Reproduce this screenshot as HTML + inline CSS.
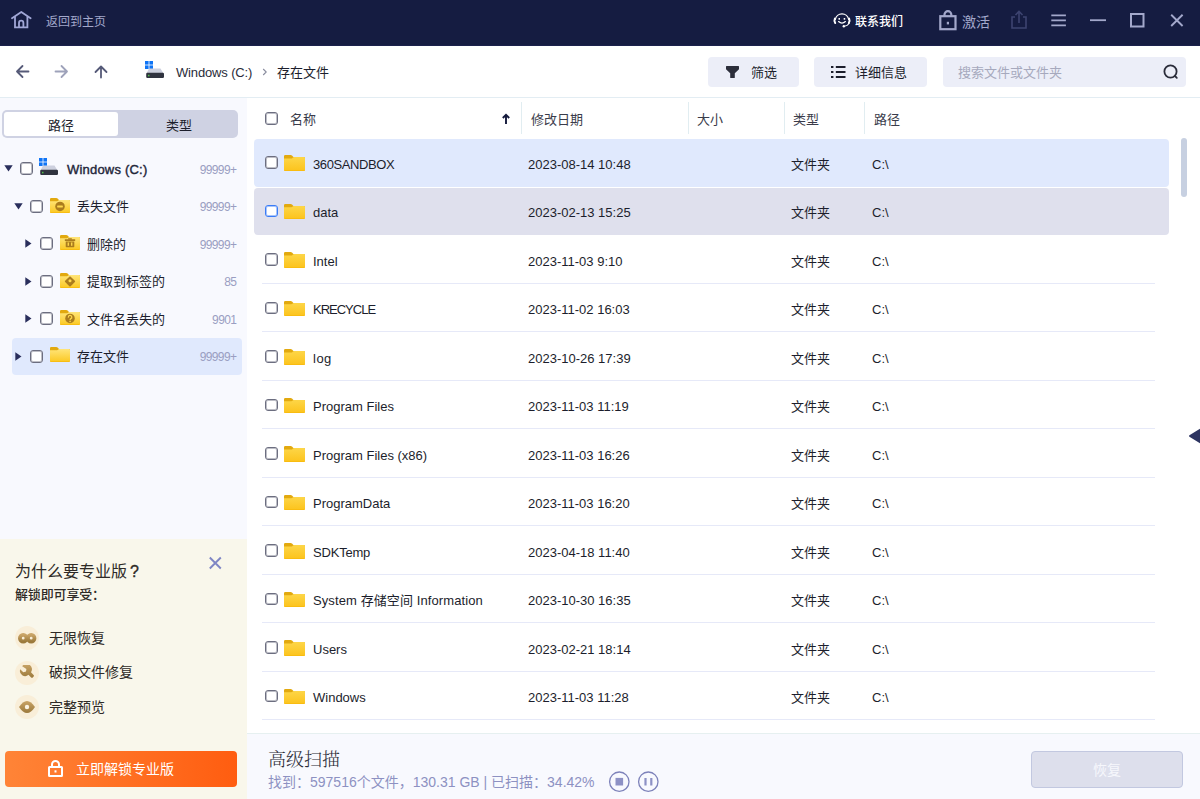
<!DOCTYPE html>
<html lang="zh-CN"><head><meta charset="utf-8"><title>数据恢复</title>
<style>
*{box-sizing:border-box;margin:0;padding:0}
html,body{width:1200px;height:799px;overflow:hidden;background:#fff}
body{font-family:"Liberation Sans","Noto Sans CJK SC",sans-serif;font-size:13px;color:#1c1e2c;position:relative}
.abs{position:absolute}
i{font-style:normal}
.t{position:absolute;white-space:nowrap;line-height:20px}
#title{position:absolute;left:0;top:0;width:1200px;height:46px;background:#151c41;border-bottom:1px solid #1b214c}
#title .t{color:#a3a8cb;font-size:12px}
#tool{position:absolute;left:0;top:46px;width:1200px;height:52px;background:#fff;border-bottom:1px solid #e3edf3}
.btn{position:absolute;top:57px;height:30px;background:#eceef8;border-radius:4px}
#sidebg{position:absolute;left:0;top:98px;width:247px;height:701px;background:#f8f9fe}
#tabs{position:absolute;left:2px;top:110px;width:236px;height:28px;background:#cfd2e3;border-radius:5px}
#tabs i{position:absolute;left:2px;top:2px;width:114px;height:24px;background:#fff;border-radius:3px}
.cb{position:absolute;width:13px;height:13px;border:1px solid #6c6e80;border-radius:3px;background:#fff;box-shadow:inset 0 0 0 1px rgba(108,110,128,.45)}
.cnt{position:absolute;white-space:nowrap;line-height:20px;color:#9a9ec2;font-size:12px;text-align:right;width:60px;left:177px;letter-spacing:-.6px;padding-right:.6px}
.ar{position:absolute}
#promo{position:absolute;left:0;top:539px;width:247px;height:260px;background:#f9f7eb}
.ic{position:absolute;left:15px;width:24px;height:24px;border-radius:12px;background:#f9eed8}
.it{position:absolute;left:49px;font-size:14px;color:#2e2a26;line-height:20px;white-space:nowrap}
#unlock{position:absolute;left:5px;top:751px;width:232px;height:36px;border-radius:4px;background:linear-gradient(90deg,#ff8437,#ff5d10)}
.h{position:absolute;top:110px;line-height:20px;white-space:nowrap;color:#3a3c4b}
.sep{position:absolute;top:102px;width:1px;height:32px;background:#e1edf1}
.row{position:absolute;left:262px;width:893px;border-bottom:1px solid #e6e9f8;white-space:nowrap}
.row .bg{display:none}
.row.sel,.row.hov{border-bottom:none}
.row.sel .bg,.row.hov .bg{display:block;position:absolute;left:-8px;top:2px;right:-14px;bottom:0;border-radius:4px;background:#e0e9fd}
.row.hov .bg{background:#dfe0ed;top:1px}
.row.sel .bg{top:1px}
.row>*{position:absolute}
.row .cb{left:3px;top:18px}
.row .fold{left:22px;top:17px}
.row span{line-height:20px;top:17px}
.row .nm{left:51px}
.row .dt{left:266px}
.row .ty{left:529px}
.row .pa{left:610px}
.row.odd .cb{height:12px}
.row.odd span{top:16px}
.row.odd .fold{height:15px}
.row.hov .cb{border-color:#3b7cf6;box-shadow:inset 0 0 0 1px rgba(59,124,246,.45)}
#bot{position:absolute;left:247px;top:733px;width:953px;height:66px;background:#f8f9fe;border-top:1px solid #e6f0f0}
#scroll{position:absolute;left:1181px;top:138px;width:6px;height:59px;border-radius:3px;background:#c7d0e1}
</style></head><body>
<svg width="0" height="0" style="position:absolute"><defs>
<linearGradient id="fg" x1="0" y1="0" x2="0" y2="1"><stop offset="0" stop-color="#fdd648"/><stop offset="1" stop-color="#fcc31c"/></linearGradient>
<linearGradient id="fg2" x1="0" y1="0" x2="0" y2="1"><stop offset="0" stop-color="#ffe57a"/><stop offset="1" stop-color="#fbc822"/></linearGradient>
<linearGradient id="gd" x1="0" y1="0" x2="0" y2="1"><stop offset="0" stop-color="#c9a467"/><stop offset="1" stop-color="#9c7a3c"/></linearGradient>
</defs></svg>
<div id="title">
 <svg class="abs" style="left:11px;top:10px" width="21" height="19" viewBox="0 0 21 19" fill="none" stroke="#a1a7d6" stroke-width="1.800" stroke-linejoin="round" stroke-linecap="round"><path d="M1 8.200L10.300 1.900l9.300 6.300"/><path d="M4 6.800V17.300H16.400V6.800" stroke-linejoin="miter"/><path d="M8 17V12.900a2.200 2.200 0 0 1 4.400 0V17"/></svg>
 <span class="t" style="left:46px;top:12px">返回到主页</span>
 <svg class="abs" style="left:832px;top:12px" width="20" height="17" viewBox="0 0 20 17" fill="none" stroke="#fff" stroke-width="1.200" stroke-linecap="round"><path d="M3.300 7.500A6.800 6.800 0 0 1 16.700 7.500"/><path d="M2.900 6.500Q1.800 8.800 3.200 11.100M17.100 6.500Q18.200 8.800 16.800 11.100" stroke-width="1.900"/><rect x="6.500" y="6" width="1.500" height="1.700" fill="#fff" stroke="none"/><rect x="11.700" y="6" width="1.500" height="1.700" fill="#fff" stroke="none"/><path d="M6.600 9.600Q10 12.600 13.400 9.600" stroke-width="1.300"/><path d="M17 11.500Q15.500 13.800 12.500 14.200" stroke-width="1.100"/><circle cx="11.800" cy="14.200" r="1.200" fill="#fff" stroke="none"/></svg>
 <span class="t" style="left:855px;top:12px;color:#fff;font-weight:500">联系我们</span>
 <svg class="abs" style="left:939px;top:10px" width="18" height="21" viewBox="0 0 18 21" fill="none" stroke="#a3a8cb" stroke-width="2.200"><rect x="1.300" y="6.200" width="15.200" height="13"/><path d="M5.500 6.200V4.600a3.400 3.400 0 0 1 6.800 0v1.600"/><rect x="7.800" y="11.800" width="2.200" height="2.600" fill="#a3a8cb" stroke="none"/></svg>
 <span class="t" style="left:962px;top:12px;font-size:14px">激活</span>
 <svg class="abs" style="left:1011px;top:10px" width="16" height="19" viewBox="0 0 16 19" fill="none" stroke="#3d4470" stroke-width="1.600"><path d="M4 7H1v11h14V7h-3"/><path d="M8 13V2M4.500 5L8 1.500 11.500 5"/></svg>
 <svg class="abs" style="left:1051px;top:13px" width="16" height="15" viewBox="0 0 16 15" stroke="#a3a8cb" stroke-width="1.800"><path d="M.3 2.300h14.600M.3 7.300h14.600M.3 12.300h14.600"/></svg>
 <svg class="abs" style="left:1090px;top:19px" width="17" height="3" viewBox="0 0 17 3" stroke="#a3a8cb" stroke-width="1.800"><path d="M0 1.200h16"/></svg>
 <svg class="abs" style="left:1130px;top:13px" width="15" height="15" viewBox="0 0 15 15" fill="none" stroke="#a3a8cb" stroke-width="2"><rect x="1" y="1" width="12.500" height="12.500"/></svg>
 <svg class="abs" style="left:1170px;top:14px" width="14" height="13" viewBox="0 0 14 13" stroke="#a3a8cb" stroke-width="1.900"><path d="M1.200.800l11.400 11.200M12.600.800L1.200 12"/></svg>
</div>
<div id="tool"></div>
<svg class="abs" style="left:15px;top:64px" width="15" height="15" viewBox="0 0 15 15" fill="none" stroke="#565a78" stroke-width="1.800" stroke-linecap="round" stroke-linejoin="round"><path d="M13.500 7.500H2M7.500 2L2 7.500 7.500 13"/></svg>
<svg class="abs" style="left:54px;top:64px" width="15" height="15" viewBox="0 0 15 15" fill="none" stroke="#9ea2ba" stroke-width="1.800" stroke-linecap="round" stroke-linejoin="round"><path d="M1.500 7.500H13M7.500 2L13 7.500 7.500 13"/></svg>
<svg class="abs" style="left:93px;top:64px" width="16" height="15" viewBox="0 0 16 15" fill="none" stroke="#565a78" stroke-width="1.800" stroke-linecap="round" stroke-linejoin="round"><path d="M8 13.500V2.500M2.500 8L8 2.500 13.500 8"/></svg>
<svg class="abs" style="left:145px;top:61px" width="19" height="17" viewBox="0 0 19 17"><rect x="0" y="0" width="3.600" height="3.600" fill="#0f74f5"/><rect x="4.400" y="0" width="3.600" height="3.600" fill="#0f74f5"/><rect x="0" y="4.400" width="3.600" height="3.600" fill="#0f74f5"/><rect x="4.400" y="4.400" width="3.600" height="3.600" fill="#0f74f5"/><path d="M4 7.500H15.500L18.500 12.500H1.500z" fill="#cdd0de"/><rect x="1.200" y="11.800" width="17.800" height="5.200" rx="1.200" fill="#30333f"/><rect x="3" y="13.800" width="1.500" height="1.500" fill="#4fc04a"/></svg>
<span class="t" style="left:176px;top:63px;color:#2a2c3a;letter-spacing:-.15px">Windows (C:)</span>
<svg class="abs" style="left:262px;top:68px" width="6" height="8" viewBox="0 0 6 8" fill="none" stroke="#8a8d9f" stroke-width="1.100"><path d="M1.200 1l3 3-3 3"/></svg>
<span class="t" style="left:277px;top:63px">存在文件</span>
<div class="btn" style="left:708px;width:91px"></div>
<svg class="abs" style="left:726px;top:66px" width="13" height="12" viewBox="0 0 13 12"><path d="M.6 0h11.800q.6 0 .6.600v2.600L8.800 7.200V11.500q0 .5-.5.500H4.700q-.5 0-.5-.5V7.200L0 3.200V.6Q0 0 .6 0z" fill="#2c2e3b"/></svg>
<span class="t" style="left:751px;top:63px">筛选</span>
<div class="btn" style="left:814px;width:113px"></div>
<svg class="abs" style="left:831px;top:66px" width="14.500" height="12" viewBox="0 0 15 12" preserveAspectRatio="none" fill="#1c1e2c"><rect x="0" y="0" width="2.500" height="2"/><rect x="5" y="0" width="10" height="2"/><rect x="0" y="5" width="2.500" height="2"/><rect x="5" y="5" width="10" height="2"/><rect x="0" y="10" width="2.500" height="2"/><rect x="5" y="10" width="10" height="2"/></svg>
<span class="t" style="left:855px;top:63px">详细信息</span>
<div class="btn" style="left:943px;width:243px"></div>
<span class="t" style="left:958px;top:63px;color:#a6a9bd">搜索文件或文件夹</span>
<svg class="abs" style="left:1163px;top:64px" width="16" height="16" viewBox="0 0 16 16" fill="none" stroke="#2a2c3a" stroke-width="1.800"><circle cx="7.500" cy="7.500" r="6.100"/><path d="M12 12l1.800 1.800" stroke-linecap="round"/></svg>

<div id="sidebg"></div>
<div id="tabs"><i></i></div>
<span class="t" style="left:48px;top:116px">路径</span>
<span class="t" style="left:166px;top:116px">类型</span>

<svg class="ar" style="left:4px;top:165px" width="9" height="7" viewBox="0 0 9 7"><path d="M.3.3h8.400L4.500 6.500z" fill="#2a2f5c"/></svg>
<i class="cb" style="left:20px;top:162px"></i>
<svg class="abs" style="left:39px;top:158px" width="19" height="17" viewBox="0 0 19 17"><rect x="0" y="0" width="3.600" height="3.600" fill="#0f74f5"/><rect x="4.400" y="0" width="3.600" height="3.600" fill="#0f74f5"/><rect x="0" y="4.400" width="3.600" height="3.600" fill="#0f74f5"/><rect x="4.400" y="4.400" width="3.600" height="3.600" fill="#0f74f5"/><path d="M4 7.500H15.500L18.500 12.500H1.500z" fill="#cdd0de"/><rect x="1.200" y="11.800" width="17.800" height="5.200" rx="1.200" fill="#30333f"/><rect x="3" y="13.800" width="1.500" height="1.500" fill="#4fc04a"/></svg>
<span class="t" style="left:67px;top:160px;-webkit-text-stroke:.4px #23263a;color:#23263a;letter-spacing:.2px">Windows (C:)</span><span class="cnt" style="top:160px">99999+</span>

<svg class="ar" style="left:14px;top:203px" width="9" height="7" viewBox="0 0 9 7"><path d="M.3.3h8.400L4.500 6.500z" fill="#2a2f5c"/></svg>
<i class="cb" style="left:30px;top:200px"></i>
<svg class="abs" style="left:49.500px;top:198px" width="20" height="15" viewBox="0 0 21 16" preserveAspectRatio="none"><path d="M0 1.200Q0 0 1.200 0H6.600Q7.400 0 8 .600L9.400 2H19.800Q21 2 21 3.200V6H0z" fill="#e2a90f"/><path d="M0 3.400H7.400Q8 3.400 8.500 2.900L9 2.400Q9.400 2 10 2H19.800Q21 2 21 3.200V14.800Q21 16 19.800 16H1.200Q0 16 0 14.800z" fill="url(#fg2)"/><path d="M0 14.300V14.800Q0 16 1.200 16H19.800Q21 16 21 14.800V14.300Q21 15.300 19.800 15.300H1.200Q0 15.300 0 14.300z" fill="#f7b90d"/><circle cx="10.500" cy="9" r="5" fill="#ab7c1d"/><rect x="7.500" y="8" width="6" height="2" rx=".5" fill="#ffd84c"/></svg>
<span class="t" style="left:77px;top:197px">丢失文件</span><span class="cnt" style="top:197px">99999+</span>

<svg class="ar" style="left:25px;top:239px" width="7" height="9" viewBox="0 0 7 9"><path d="M.3.300v8.400L6.500 4.500z" fill="#2a2f5c"/></svg>
<i class="cb" style="left:40px;top:237px"></i>
<svg class="abs" style="left:59.500px;top:235px" width="20" height="15" viewBox="0 0 21 16" preserveAspectRatio="none"><path d="M0 1.200Q0 0 1.200 0H6.600Q7.400 0 8 .600L9.400 2H19.800Q21 2 21 3.200V6H0z" fill="#e2a90f"/><path d="M0 3.400H7.400Q8 3.400 8.500 2.900L9 2.400Q9.400 2 10 2H19.800Q21 2 21 3.200V14.800Q21 16 19.800 16H1.200Q0 16 0 14.800z" fill="url(#fg2)"/><path d="M0 14.300V14.800Q0 16 1.200 16H19.800Q21 16 21 14.800V14.300Q21 15.300 19.800 15.300H1.200Q0 15.300 0 14.300z" fill="#f7b90d"/><g fill="#ab7c1d"><rect x="5" y="4.500" width="11" height="1.800" rx=".4"/><rect x="8.500" y="3.400" width="4" height="1.500" rx=".4"/><path d="M6 7h9v5.300q0 .7-.7.700H6.700q-.7 0-.7-.7z"/></g><rect x="8" y="8" width="1.400" height="3.500" fill="#ffd84c"/><rect x="11.600" y="8" width="1.400" height="3.500" fill="#ffd84c"/></svg>
<span class="t" style="left:87px;top:235px">删除的</span><span class="cnt" style="top:235px">99999+</span>

<svg class="ar" style="left:25px;top:277px" width="7" height="9" viewBox="0 0 7 9"><path d="M.3.300v8.400L6.500 4.500z" fill="#2a2f5c"/></svg>
<i class="cb" style="left:40px;top:275px"></i>
<svg class="abs" style="left:59.500px;top:273px" width="20" height="15" viewBox="0 0 21 16" preserveAspectRatio="none"><path d="M0 1.200Q0 0 1.200 0H6.600Q7.400 0 8 .600L9.400 2H19.800Q21 2 21 3.200V6H0z" fill="#e2a90f"/><path d="M0 3.400H7.400Q8 3.400 8.500 2.900L9 2.400Q9.400 2 10 2H19.800Q21 2 21 3.200V14.800Q21 16 19.800 16H1.200Q0 16 0 14.800z" fill="url(#fg2)"/><path d="M0 14.300V14.800Q0 16 1.200 16H19.800Q21 16 21 14.800V14.300Q21 15.300 19.800 15.300H1.200Q0 15.300 0 14.300z" fill="#f7b90d"/><path d="M9.800 3.900Q10.500 3.200 11.200 3.900L15.600 8.300Q16.300 9 15.600 9.700L11.200 14.100Q10.500 14.800 9.800 14.100L5.400 9.700Q4.700 9 5.400 8.300z" fill="#ab7c1d"/><circle cx="10.500" cy="8.300" r="1.600" fill="#ffd84c"/></svg>
<span class="t" style="left:87px;top:272px">提取到标签的</span><span class="cnt" style="top:272px">85</span>

<svg class="ar" style="left:25px;top:314px" width="7" height="9" viewBox="0 0 7 9"><path d="M.3.300v8.400L6.500 4.500z" fill="#2a2f5c"/></svg>
<i class="cb" style="left:40px;top:312px"></i>
<svg class="abs" style="left:59.500px;top:310px" width="20" height="15" viewBox="0 0 21 16" preserveAspectRatio="none"><path d="M0 1.200Q0 0 1.200 0H6.600Q7.400 0 8 .600L9.400 2H19.800Q21 2 21 3.200V6H0z" fill="#e2a90f"/><path d="M0 3.400H7.400Q8 3.400 8.500 2.900L9 2.400Q9.400 2 10 2H19.800Q21 2 21 3.200V14.800Q21 16 19.800 16H1.200Q0 16 0 14.800z" fill="url(#fg2)"/><path d="M0 14.300V14.800Q0 16 1.200 16H19.800Q21 16 21 14.800V14.300Q21 15.300 19.800 15.300H1.200Q0 15.300 0 14.300z" fill="#f7b90d"/><circle cx="10.500" cy="9" r="5" fill="#ab7c1d"/><path d="M8.800 7.600a1.800 1.800 0 1 1 2.600 1.600q-.8.400-.8 1.200" fill="none" stroke="#ffd84c" stroke-width="1.300" stroke-linecap="round"/><circle cx="10.600" cy="12.200" r=".8" fill="#ffd84c"/></svg>
<span class="t" style="left:87px;top:310px">文件名丢失的</span><span class="cnt" style="top:310px">9901</span>

<div class="abs" style="left:12px;top:338px;width:230px;height:37px;border-radius:4px;background:#e0e9fd"></div>
<svg class="ar" style="left:15px;top:352px" width="7" height="9" viewBox="0 0 7 9"><path d="M.3.300v8.400L6.500 4.500z" fill="#2a2f5c"/></svg>
<i class="cb" style="left:30px;top:350px"></i>
<svg class="abs" style="left:49.500px;top:347px" width="20" height="15" viewBox="0 0 21 16" preserveAspectRatio="none"><path d="M0 1.200Q0 0 1.200 0H6.600Q7.400 0 8 .600L9.400 2H19.800Q21 2 21 3.200V6H0z" fill="#e2a90f"/><path d="M0 3.400H7.400Q8 3.400 8.500 2.900L9 2.400Q9.400 2 10 2H19.800Q21 2 21 3.200V14.800Q21 16 19.800 16H1.200Q0 16 0 14.800z" fill="url(#fg2)"/><path d="M0 14.300V14.800Q0 16 1.200 16H19.800Q21 16 21 14.800V14.300Q21 15.300 19.800 15.300H1.200Q0 15.300 0 14.300z" fill="#f7b90d"/></svg>
<span class="t" style="left:77px;top:347px">存在文件</span><span class="cnt" style="top:347px">99999+</span>

<div id="promo"></div>
<span class="t" style="left:15px;top:560px;font-size:16px;line-height:24px;color:#2e2a26">为什么要专业版<b style="margin-left:3px;font-weight:normal;-webkit-text-stroke:.35px #2e2a26">?</b></span>
<span class="t" style="left:15px;top:585px;font-size:13px;font-weight:500;color:#2e2a26;letter-spacing:-.15px">解锁即可享受：</span>
<svg class="abs" style="left:208px;top:556px" width="14" height="14" viewBox="0 0 14 14" stroke="#7f86c4" stroke-width="1.900"><path d="M1.800 1.500l11 11M12.800 1.500l-11 11"/></svg>
<i class="ic" style="top:626px"></i>
<svg class="abs" style="left:17px;top:632px" width="20" height="12" viewBox="0 0 20 12" fill="none" stroke="url(#gd)" stroke-width="3.800"><circle cx="6.200" cy="6.200" r="3.300"/><circle cx="14.200" cy="6.200" r="3.300"/></svg>
<span class="it" style="top:628px">无限恢复</span>
<i class="ic" style="top:661px"></i>
<svg class="abs" style="left:19px;top:665px" width="16" height="16" viewBox="0 0 16 16"><path d="M3.200 1.200A5.200 5.200 0 0 1 12 7.300L14.600 9.900Q15.400 10.800 14.600 11.600L13.800 12.400Q13 13.200 12.100 12.400L9.500 9.800A5.200 5.200 0 0 1 1.200 4.200L4.300 7.200 7 6.500 7.400 4z" fill="url(#gd)"/></svg>
<span class="it" style="top:662px">破损文件修复</span>
<i class="ic" style="top:695px"></i>
<svg class="abs" style="left:19px;top:701px" width="16" height="12" viewBox="0 0 16 12"><path d="M0 6Q4 0 8 0T16 6Q12 12 8 12T0 6z" fill="url(#gd)"/><circle cx="8" cy="6" r="2.200" fill="#fbf3e2"/></svg>
<span class="it" style="top:697px">完整预览</span>
<div id="unlock"></div>
<svg class="abs" style="left:48px;top:760px" width="15" height="17" viewBox="0 0 15 17" fill="none" stroke="#fff" stroke-width="2"><rect x="1" y="7" width="13" height="9" rx=".5"/><path d="M4 7V4.500a3.500 3.500 0 0 1 7 0V7"/><rect x="6.500" y="10.300" width="2" height="2.200" fill="#fff" stroke="none"/></svg>
<span class="t" style="left:76px;top:759px;font-size:14px;color:#fff">立即解锁专业版</span>

<i class="cb" style="left:265px;top:112px"></i>
<span class="h" style="left:290px">名称</span>
<svg class="abs" style="left:501px;top:113px" width="10" height="12" viewBox="0 0 10 12" fill="none" stroke="#141a3c" stroke-width="1.900"><path d="M5 11V2.200M1.800 5L5 1.800 8.200 5"/></svg>
<div class="sep" style="left:521px"></div><span class="h" style="left:531px">修改日期</span>
<div class="sep" style="left:688px"></div><span class="h" style="left:697px">大小</span>
<div class="sep" style="left:784px"></div><span class="h" style="left:793px">类型</span>
<div class="sep" style="left:864px"></div><span class="h" style="left:874px">路径</span>
<div id="list">
<div class="row sel" style="top:138px;height:49px"><i class="bg"></i><i class="cb"></i><svg class="fold" width="21" height="16" viewBox="0 0 21 16" preserveAspectRatio="none"><path d="M0 1.200Q0 0 1.200 0H6.600Q7.400 0 8 .600L9.400 2H19.800Q21 2 21 3.200V6H0z" fill="#e2a90f"/><path d="M0 3.400H7.400Q8 3.400 8.500 2.900L9 2.400Q9.400 2 10 2H19.800Q21 2 21 3.200V14.800Q21 16 19.800 16H1.200Q0 16 0 14.800z" fill="url(#fg)"/><path d="M0 14.300V14.800Q0 16 1.200 16H19.800Q21 16 21 14.800V14.300Q21 15.300 19.800 15.300H1.200Q0 15.300 0 14.300z" fill="#f7b90d"/></svg><span class="nm" style="letter-spacing:-.4px">360SANDBOX</span><span class="dt">2023-08-14 10:48</span><span class="ty">文件夹</span><span class="pa">C:\</span></div>
<div class="row hov odd" style="top:187px;height:48px"><i class="bg"></i><i class="cb"></i><svg class="fold" width="21" height="16" viewBox="0 0 21 16" preserveAspectRatio="none"><path d="M0 1.200Q0 0 1.200 0H6.600Q7.400 0 8 .600L9.400 2H19.800Q21 2 21 3.200V6H0z" fill="#e2a90f"/><path d="M0 3.400H7.400Q8 3.400 8.500 2.900L9 2.400Q9.400 2 10 2H19.800Q21 2 21 3.200V14.800Q21 16 19.800 16H1.200Q0 16 0 14.800z" fill="url(#fg)"/><path d="M0 14.300V14.800Q0 16 1.200 16H19.800Q21 16 21 14.800V14.300Q21 15.300 19.800 15.300H1.200Q0 15.300 0 14.300z" fill="#f7b90d"/></svg><span class="nm">data</span><span class="dt">2023-02-13 15:25</span><span class="ty">文件夹</span><span class="pa">C:\</span></div>
<div class="row" style="top:235px;height:49px"><i class="bg"></i><i class="cb"></i><svg class="fold" width="21" height="16" viewBox="0 0 21 16" preserveAspectRatio="none"><path d="M0 1.200Q0 0 1.200 0H6.600Q7.400 0 8 .600L9.400 2H19.800Q21 2 21 3.200V6H0z" fill="#e2a90f"/><path d="M0 3.400H7.400Q8 3.400 8.500 2.900L9 2.400Q9.400 2 10 2H19.800Q21 2 21 3.200V14.800Q21 16 19.800 16H1.200Q0 16 0 14.800z" fill="url(#fg)"/><path d="M0 14.300V14.800Q0 16 1.200 16H19.800Q21 16 21 14.800V14.300Q21 15.300 19.800 15.300H1.200Q0 15.300 0 14.300z" fill="#f7b90d"/></svg><span class="nm">Intel</span><span class="dt">2023-11-03 9:10</span><span class="ty">文件夹</span><span class="pa">C:\</span></div>
<div class="row odd" style="top:284px;height:48px"><i class="bg"></i><i class="cb"></i><svg class="fold" width="21" height="16" viewBox="0 0 21 16" preserveAspectRatio="none"><path d="M0 1.200Q0 0 1.200 0H6.600Q7.400 0 8 .600L9.400 2H19.800Q21 2 21 3.200V6H0z" fill="#e2a90f"/><path d="M0 3.400H7.400Q8 3.400 8.500 2.900L9 2.400Q9.400 2 10 2H19.800Q21 2 21 3.200V14.800Q21 16 19.800 16H1.200Q0 16 0 14.800z" fill="url(#fg)"/><path d="M0 14.300V14.800Q0 16 1.200 16H19.800Q21 16 21 14.800V14.300Q21 15.300 19.800 15.300H1.200Q0 15.300 0 14.300z" fill="#f7b90d"/></svg><span class="nm" style="letter-spacing:-1px">KRECYCLE</span><span class="dt">2023-11-02 16:03</span><span class="ty">文件夹</span><span class="pa">C:\</span></div>
<div class="row" style="top:332px;height:49px"><i class="bg"></i><i class="cb"></i><svg class="fold" width="21" height="16" viewBox="0 0 21 16" preserveAspectRatio="none"><path d="M0 1.200Q0 0 1.200 0H6.600Q7.400 0 8 .600L9.400 2H19.800Q21 2 21 3.200V6H0z" fill="#e2a90f"/><path d="M0 3.400H7.400Q8 3.400 8.500 2.900L9 2.400Q9.400 2 10 2H19.800Q21 2 21 3.200V14.800Q21 16 19.800 16H1.200Q0 16 0 14.800z" fill="url(#fg)"/><path d="M0 14.300V14.800Q0 16 1.200 16H19.800Q21 16 21 14.800V14.300Q21 15.300 19.800 15.300H1.200Q0 15.300 0 14.300z" fill="#f7b90d"/></svg><span class="nm" style="letter-spacing:.5px">log</span><span class="dt">2023-10-26 17:39</span><span class="ty">文件夹</span><span class="pa">C:\</span></div>
<div class="row odd" style="top:381px;height:48px"><i class="bg"></i><i class="cb"></i><svg class="fold" width="21" height="16" viewBox="0 0 21 16" preserveAspectRatio="none"><path d="M0 1.200Q0 0 1.200 0H6.600Q7.400 0 8 .600L9.400 2H19.800Q21 2 21 3.200V6H0z" fill="#e2a90f"/><path d="M0 3.400H7.400Q8 3.400 8.500 2.900L9 2.400Q9.400 2 10 2H19.800Q21 2 21 3.200V14.800Q21 16 19.800 16H1.200Q0 16 0 14.800z" fill="url(#fg)"/><path d="M0 14.300V14.800Q0 16 1.200 16H19.800Q21 16 21 14.800V14.300Q21 15.300 19.800 15.300H1.200Q0 15.300 0 14.300z" fill="#f7b90d"/></svg><span class="nm">Program Files</span><span class="dt">2023-11-03 11:19</span><span class="ty">文件夹</span><span class="pa">C:\</span></div>
<div class="row" style="top:429px;height:49px"><i class="bg"></i><i class="cb"></i><svg class="fold" width="21" height="16" viewBox="0 0 21 16" preserveAspectRatio="none"><path d="M0 1.200Q0 0 1.200 0H6.600Q7.400 0 8 .600L9.400 2H19.800Q21 2 21 3.200V6H0z" fill="#e2a90f"/><path d="M0 3.400H7.400Q8 3.400 8.500 2.900L9 2.400Q9.400 2 10 2H19.800Q21 2 21 3.200V14.800Q21 16 19.800 16H1.200Q0 16 0 14.800z" fill="url(#fg)"/><path d="M0 14.300V14.800Q0 16 1.200 16H19.800Q21 16 21 14.800V14.300Q21 15.300 19.800 15.300H1.200Q0 15.300 0 14.300z" fill="#f7b90d"/></svg><span class="nm">Program Files (x86)</span><span class="dt">2023-11-03 16:26</span><span class="ty">文件夹</span><span class="pa">C:\</span></div>
<div class="row odd" style="top:478px;height:48px"><i class="bg"></i><i class="cb"></i><svg class="fold" width="21" height="16" viewBox="0 0 21 16" preserveAspectRatio="none"><path d="M0 1.200Q0 0 1.200 0H6.600Q7.400 0 8 .600L9.400 2H19.800Q21 2 21 3.200V6H0z" fill="#e2a90f"/><path d="M0 3.400H7.400Q8 3.400 8.500 2.900L9 2.400Q9.400 2 10 2H19.800Q21 2 21 3.200V14.800Q21 16 19.800 16H1.200Q0 16 0 14.800z" fill="url(#fg)"/><path d="M0 14.300V14.800Q0 16 1.200 16H19.800Q21 16 21 14.800V14.300Q21 15.300 19.800 15.300H1.200Q0 15.300 0 14.300z" fill="#f7b90d"/></svg><span class="nm">ProgramData</span><span class="dt">2023-11-03 16:20</span><span class="ty">文件夹</span><span class="pa">C:\</span></div>
<div class="row" style="top:526px;height:49px"><i class="bg"></i><i class="cb"></i><svg class="fold" width="21" height="16" viewBox="0 0 21 16" preserveAspectRatio="none"><path d="M0 1.200Q0 0 1.200 0H6.600Q7.400 0 8 .600L9.400 2H19.800Q21 2 21 3.200V6H0z" fill="#e2a90f"/><path d="M0 3.400H7.400Q8 3.400 8.500 2.900L9 2.400Q9.400 2 10 2H19.800Q21 2 21 3.200V14.800Q21 16 19.800 16H1.200Q0 16 0 14.800z" fill="url(#fg)"/><path d="M0 14.300V14.800Q0 16 1.200 16H19.800Q21 16 21 14.800V14.300Q21 15.300 19.800 15.300H1.200Q0 15.300 0 14.300z" fill="#f7b90d"/></svg><span class="nm" style="letter-spacing:-.2px">SDKTemp</span><span class="dt">2023-04-18 11:40</span><span class="ty">文件夹</span><span class="pa">C:\</span></div>
<div class="row odd" style="top:575px;height:48px"><i class="bg"></i><i class="cb"></i><svg class="fold" width="21" height="16" viewBox="0 0 21 16" preserveAspectRatio="none"><path d="M0 1.200Q0 0 1.200 0H6.600Q7.400 0 8 .600L9.400 2H19.800Q21 2 21 3.200V6H0z" fill="#e2a90f"/><path d="M0 3.400H7.400Q8 3.400 8.500 2.900L9 2.400Q9.400 2 10 2H19.800Q21 2 21 3.200V14.800Q21 16 19.800 16H1.200Q0 16 0 14.800z" fill="url(#fg)"/><path d="M0 14.300V14.800Q0 16 1.200 16H19.800Q21 16 21 14.800V14.300Q21 15.300 19.800 15.300H1.200Q0 15.300 0 14.300z" fill="#f7b90d"/></svg><span class="nm" style="letter-spacing:.1px">System 存储空间 Information</span><span class="dt">2023-10-30 16:35</span><span class="ty">文件夹</span><span class="pa">C:\</span></div>
<div class="row" style="top:623px;height:49px"><i class="bg"></i><i class="cb"></i><svg class="fold" width="21" height="16" viewBox="0 0 21 16" preserveAspectRatio="none"><path d="M0 1.200Q0 0 1.200 0H6.600Q7.400 0 8 .600L9.400 2H19.800Q21 2 21 3.200V6H0z" fill="#e2a90f"/><path d="M0 3.400H7.400Q8 3.400 8.500 2.900L9 2.400Q9.400 2 10 2H19.800Q21 2 21 3.200V14.800Q21 16 19.800 16H1.200Q0 16 0 14.800z" fill="url(#fg)"/><path d="M0 14.300V14.800Q0 16 1.200 16H19.800Q21 16 21 14.800V14.300Q21 15.300 19.800 15.300H1.200Q0 15.300 0 14.300z" fill="#f7b90d"/></svg><span class="nm">Users</span><span class="dt">2023-02-21 18:14</span><span class="ty">文件夹</span><span class="pa">C:\</span></div>
<div class="row odd" style="top:672px;height:48px"><i class="bg"></i><i class="cb"></i><svg class="fold" width="21" height="16" viewBox="0 0 21 16" preserveAspectRatio="none"><path d="M0 1.200Q0 0 1.200 0H6.600Q7.400 0 8 .600L9.400 2H19.800Q21 2 21 3.200V6H0z" fill="#e2a90f"/><path d="M0 3.400H7.400Q8 3.400 8.500 2.900L9 2.400Q9.400 2 10 2H19.800Q21 2 21 3.200V14.800Q21 16 19.800 16H1.200Q0 16 0 14.800z" fill="url(#fg)"/><path d="M0 14.300V14.800Q0 16 1.200 16H19.800Q21 16 21 14.800V14.300Q21 15.300 19.800 15.300H1.200Q0 15.300 0 14.300z" fill="#f7b90d"/></svg><span class="nm">Windows</span><span class="dt">2023-11-03 11:28</span><span class="ty">文件夹</span><span class="pa">C:\</span></div>
<div class="row" style="top:720px;height:49px"><i class="bg"></i><i class="cb"></i><svg class="fold" width="21" height="16" viewBox="0 0 21 16" preserveAspectRatio="none"><path d="M0 1.200Q0 0 1.200 0H6.600Q7.400 0 8 .600L9.400 2H19.800Q21 2 21 3.200V6H0z" fill="#e2a90f"/><path d="M0 3.400H7.400Q8 3.400 8.500 2.900L9 2.400Q9.400 2 10 2H19.800Q21 2 21 3.200V14.800Q21 16 19.800 16H1.200Q0 16 0 14.800z" fill="url(#fg)"/><path d="M0 14.300V14.800Q0 16 1.200 16H19.800Q21 16 21 14.800V14.300Q21 15.300 19.800 15.300H1.200Q0 15.300 0 14.300z" fill="#f7b90d"/></svg><span class="nm">$Recycle.Bin</span><span class="dt">2023-02-13 15:02</span><span class="ty">文件夹</span><span class="pa">C:\</span></div>
</div>
<div id="scroll"></div>
<svg class="abs" style="left:1188px;top:428px" width="12" height="16" viewBox="0 0 12 16"><path d="M12 .8L1.400 7.300Q.6 8 1.400 8.700L12 15.200z" fill="#2d3461"/></svg>
<div id="bot"></div>
<span class="t" style="left:268px;top:748px;font-family:'Liberation Serif','Noto Serif CJK SC',serif;font-size:18px;font-weight:300;line-height:24px;color:#2c2d38">高级扫描</span>
<span class="t" style="left:268px;top:772px;font-size:14px;color:#8d91c2">找到：597516个文件，130.31 GB | 已扫描：34.42%</span>
<svg class="abs" style="left:608px;top:771px" width="52" height="22" viewBox="0 0 52 22" fill="none" stroke="#7d82ba" stroke-width="1.300"><circle cx="11.300" cy="10.700" r="9.700"/><rect x="7.500" y="6.900" width="7.600" height="7.600" fill="#8d91c5" stroke="none"/><circle cx="40.300" cy="10.700" r="9.700"/><path d="M37.500 7v7.400M43.300 7v7.400" stroke-width="2.200" stroke="#8d91c5"/></svg>
<div class="abs" style="left:1031px;top:751px;width:152px;height:37px;border:1px solid #c2c8e0;border-radius:4px;background:#dddfec"></div>
<span class="t" style="left:1093px;top:760px;font-size:14px;color:#f6f7fc">恢复</span>
</body></html>
